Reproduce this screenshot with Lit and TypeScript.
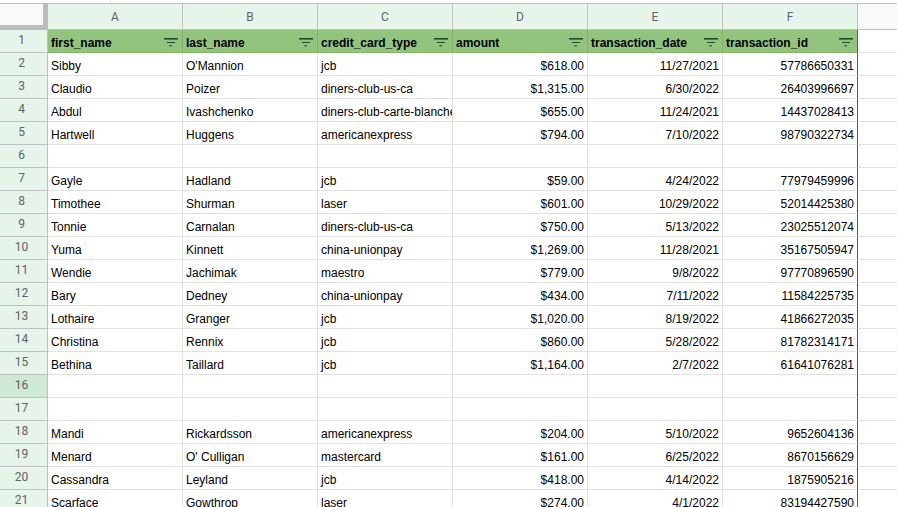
import { LitElement, html, css, svg, nothing } from "lit";
import { customElement, property } from "lit/decorators.js";
import { classMap } from "lit/directives/class-map.js";

const COLUMNS = [
  { letter: "A", name: "first_name", numeric: false },
  { letter: "B", name: "last_name", numeric: false },
  { letter: "C", name: "credit_card_type", numeric: false },
  { letter: "D", name: "amount", numeric: true },
  { letter: "E", name: "transaction_date", numeric: true },
  { letter: "F", name: "transaction_id", numeric: true },
];

const ROWS: string[][] = [
  ["Sibby", "O'Mannion", "jcb", "$618.00", "11/27/2021", "57786650331"],
  ["Claudio", "Poizer", "diners-club-us-ca", "$1,315.00", "6/30/2022", "26403996697"],
  ["Abdul", "Ivashchenko", "diners-club-carte-blanche", "$655.00", "11/24/2021", "14437028413"],
  ["Hartwell", "Huggens", "americanexpress", "$794.00", "7/10/2022", "98790322734"],
  [],
  ["Gayle", "Hadland", "jcb", "$59.00", "4/24/2022", "77979459996"],
  ["Timothee", "Shurman", "laser", "$601.00", "10/29/2022", "52014425380"],
  ["Tonnie", "Carnalan", "diners-club-us-ca", "$750.00", "5/13/2022", "23025512074"],
  ["Yuma", "Kinnett", "china-unionpay", "$1,269.00", "11/28/2021", "35167505947"],
  ["Wendie", "Jachimak", "maestro", "$779.00", "9/8/2022", "97770896590"],
  ["Bary", "Dedney", "china-unionpay", "$434.00", "7/11/2022", "11584225735"],
  ["Lothaire", "Granger", "jcb", "$1,020.00", "8/19/2022", "41866272035"],
  ["Christina", "Rennix", "jcb", "$860.00", "5/28/2022", "81782314171"],
  ["Bethina", "Taillard", "jcb", "$1,164.00", "2/7/2022", "61641076281"],
  [],
  [],
  ["Mandi", "Rickardsson", "americanexpress", "$204.00", "5/10/2022", "9652604136"],
  ["Menard", "O' Culligan", "mastercard", "$161.00", "6/25/2022", "8670156629"],
  ["Cassandra", "Leyland", "jcb", "$418.00", "4/14/2022", "1875905216"],
  ["Scarface", "Gowthrop", "laser", "$274.00", "4/1/2022", "83194427590"],
];

const ACTIVE_ROW = 16;

@customElement("filter-button")
class FilterButton extends LitElement {
  @property() column = "";

  static styles = css`
    :host {
      display: flex;
    }
    .button {
      display: flex;
      padding: 0;
      border: 0;
      background: none;
      color: #23492c;
      cursor: pointer;
    }
  `;

  render() {
    return html`<button class="button" aria-label="Filter ${this.column}">
      <svg width="14" height="10" viewBox="0 0 14 10" fill="currentColor" shape-rendering="crispEdges">
        ${svg`
          <rect x="0" y="0" width="14" height="1" />
          <rect x="0" y="1" width="14" height="1" opacity="0.6" />
          <rect x="3" y="4" width="8" height="1" />
          <rect x="5" y="7" width="3" height="1" opacity="0.5" />
          <rect x="6" y="7" width="2" height="1" opacity="0.6" />
          <rect x="5" y="8" width="3" height="1" opacity="0.3" />
        `}
      </svg>
    </button>`;
  }
}

@customElement("app-root")
class AppRoot extends LitElement {
  static styles = css`
    :host {
      display: block;
      height: 100vh;
      overflow: hidden;
      background: #fff;
      color: #000;
      font: 12px/16px "Liberation Sans", Arial, sans-serif;
    }
    .toolbar-edge {
      height: 3px;
      border-bottom: 1px solid #c0c0c0;
    }
    .divider {
      width: 1px;
      height: 3px;
      margin-left: 110px;
      background: #dadce0;
    }
    .sheet {
      width: 100%;
      table-layout: fixed;
      border-collapse: separate;
      border-spacing: 0;
    }
    .gutter {
      width: 48px;
    }
    .field {
      width: 135px;
    }
    th,
    td {
      box-sizing: border-box;
      height: 23px;
      padding: 0;
      border-right: 1px solid #e2e2e2;
      border-bottom: 1px solid #e2e2e2;
      font-weight: 400;
      white-space: nowrap;
      overflow: hidden;
    }
    .corner {
      height: 26px;
      border-right: 5px solid #bcbcbc;
      border-bottom: 5px solid #bcbcbc;
      background: #f8f9fa;
    }
    .letter,
    .number {
      border-color: #c0c0c0;
      background: #e6f4ea;
      color: #5f6368;
      font-family: Roboto, sans-serif;
      text-align: center;
    }
    .letter.unused {
      background: #f8f9fa;
    }
    .number {
      padding: 0 4px 2px 0;
      vertical-align: middle;
    }
    .number.active {
      background: #ceead6;
    }
    .name {
      border-right-color: #85b56b;
      border-bottom-color: #85b56b;
      background: #93c47d;
      font-weight: 700;
      text-align: left;
    }
    .heading {
      display: flex;
      align-items: center;
      justify-content: space-between;
      padding: 3px 4px 0 3px;
    }
    .cell {
      padding: 3px 3px 0 3px;
    }
    .cell.numeric {
      text-align: right;
    }
    .name.edge,
    .cell.edge {
      border-right-color: #188038;
    }
    .rest {
      border-right: 0;
    }
  `;

  render() {
    const last = COLUMNS.length - 1;
    return html`
      <div class="toolbar-edge"><div class="divider"></div></div>
      <table class="sheet">
        <colgroup>
          <col class="gutter" />
          ${COLUMNS.map(() => html`<col class="field" />`)}
          <col />
        </colgroup>
        <thead>
          <tr>
            <td class="corner"></td>
            ${COLUMNS.map((c) => html`<th class="letter" scope="col">${c.letter}</th>`)}
            <td class="letter unused rest"></td>
          </tr>
          <tr>
            <th class="number" scope="row">1</th>
            ${COLUMNS.map(
              (c, i) => html`<th class=${classMap({ name: true, edge: i === last })} scope="col">
                <div class="heading">
                  <span>${c.name}</span>
                  <filter-button .column=${c.name}></filter-button>
                </div>
              </th>`
            )}
            <td class="rest"></td>
          </tr>
        </thead>
        <tbody>
          ${ROWS.map((row, r) => {
            const number = r + 2;
            return html`<tr>
              <th class=${classMap({ number: true, active: number === ACTIVE_ROW })} scope="row">${number}</th>
              ${COLUMNS.map(
                (c, i) =>
                  html`<td class=${classMap({ cell: true, numeric: c.numeric, edge: i === last })}>${row[i] ?? nothing}</td>`
              )}
              <td class="rest"></td>
            </tr>`;
          })}
        </tbody>
      </table>
    `;
  }
}
